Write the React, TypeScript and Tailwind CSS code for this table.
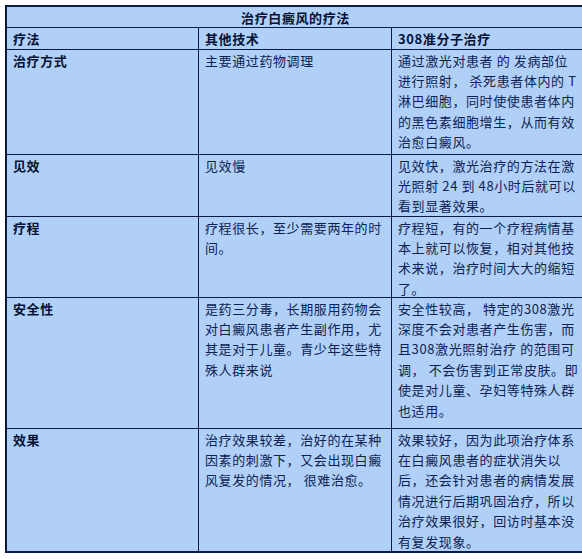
const rows: { label: string; other: string[]; laser: string[] }[] = [
  {
    label: '治疗方式',
    other: ['主要通过药物调理'],
    laser: [
      '通过激光对患者 的 发病部位',
      '进行照射， 杀死患者体内的 T',
      '淋巴细胞，同时使使患者体内',
      '的黑色素细胞增生，从而有效',
      '治愈白癜风。',
    ],
  },
  {
    label: '见效',
    other: ['见效慢'],
    laser: ['见效快，激光治疗的方法在激', '光照射 24 到 48小时后就可以', '看到显著效果。'],
  },
  {
    label: '疗程',
    other: ['疗程很长，至少需要两年的时', '间。'],
    laser: ['疗程短，有的一个疗程病情基', '本上就可以恢复，相对其他技', '术来说，治疗时间大大的缩短', '了。'],
  },
  {
    label: '安全性',
    other: ['是药三分毒，长期服用药物会', '对白癜风患者产生副作用，尤', '其是对于儿童。青少年这些特', '殊人群来说'],
    laser: [
      '安全性较高， 特定的308激光',
      '深度不会对患者产生伤害，而',
      '且308激光照射治疗 的范围可',
      '调， 不会伤害到正常皮肤。即',
      '使是对儿童、孕妇等特殊人群',
      '也适用。',
    ],
  },
  {
    label: '效果',
    other: ['治疗效果较差，治好的在某种', '因素的刺激下，又会出现白癜', '风复发的情况， 很难治愈。'],
    laser: [
      '效果较好，因为此项治疗体系',
      '在白癜风患者的症状消失以',
      '后，还会针对患者的病情发展',
      '情况进行后期巩固治疗，所以',
      '治疗效果很好，回访时基本没',
      '有复发现象。',
    ],
  },
]

function Lines({ lines }: { lines: string[] }) {
  return (
    <>
      {lines.map((l, i) => (
        <span key={i} className="flex items-center h-[20.4px] whitespace-nowrap">
          {l}
        </span>
      ))}
    </>
  )
}

export default function App() {
  const cell = 'bg-[#b1d0f7] pl-[6px] text-[#0d2252] overflow-hidden'
  const bold = 'font-bold text-[#061233]'
  return (
    <div className="w-[582px] h-[559px] overflow-hidden bg-white pt-[5px] pl-[5px] font-['Noto_Sans_CJK_SC',sans-serif] text-[13px] leading-none tracking-[0.6px]">
      <div className="w-[586px] grid grid-cols-[191px_192px_192px] grid-rows-[20px_21px_104px_61px_80px_130px_122px] gap-px bg-[#0a1a45] border-2 border-[#0a1a45]">
        <div className={'col-span-3 bg-[#b1d0f7] flex items-center justify-center ' + bold}>治疗白癜风的疗法</div>
        <div className={cell + ' flex items-center ' + bold}>疗法</div>
        <div className={cell + ' flex items-center ' + bold}>其他技术</div>
        <div className={cell + ' flex items-center ' + bold}>308准分子治疗</div>
        {rows.map((r) => (
          <div key={r.label} className="contents">
            <div className={cell + ' ' + bold}>
              <Lines lines={[r.label]} />
            </div>
            <div className={cell}>
              <Lines lines={r.other} />
            </div>
            <div className={cell}>
              <Lines lines={r.laser} />
            </div>
          </div>
        ))}
      </div>
    </div>
  )
}
